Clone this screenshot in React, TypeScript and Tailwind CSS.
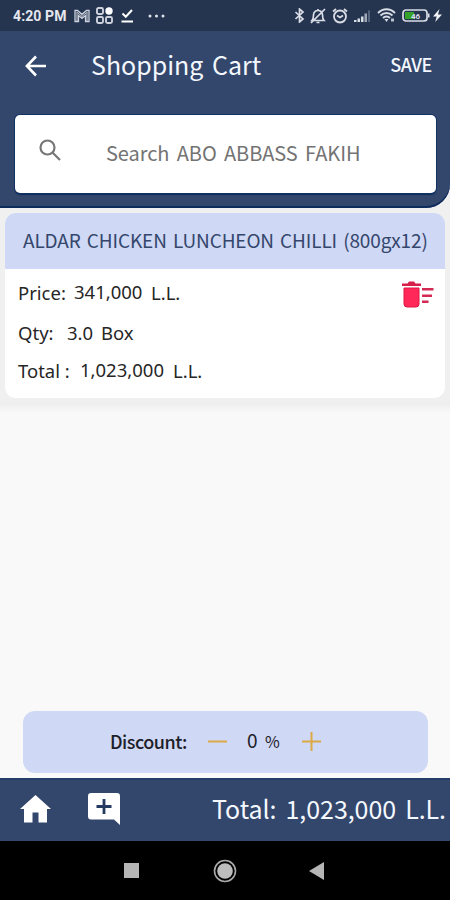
import React from "react";

const cjk = "font-['Noto_Sans_CJK_SC','Noto_Sans',sans-serif]";
const noto = "font-['Noto_Sans',sans-serif]";

function StatusBar() {
  return (
    <div className="flex h-[31px] items-center bg-[#25344f] pl-[13px] pr-[8px] text-[#e4e7ee]">
      <span className="w-[54px] whitespace-nowrap font-[Roboto,sans-serif] text-[14px] font-bold leading-none tracking-[0.1px]">4:20 PM</span>
      <svg className="ml-[7px]" width="16" height="14" viewBox="0 0 16 14" fill="none" stroke="#cdd2dd" strokeWidth="1.3">
        <path d="M1 12.500V1.500h2.500L8 5.300l4.500-3.800H15v11h-3.500V6.500L8 9.300 4.500 6.500v6z" />
        <path d="M3 3v9M13 3v9M3.500 3.500L8 7.500l4.500-4" strokeWidth="1" />
      </svg>
      <svg className="ml-[6px]" width="17" height="17" viewBox="0 0 17 17" fill="none" stroke="#cdd2dd" strokeWidth="1.900">
        <rect x="1" y="1" width="6" height="6" rx="1.500" />
        <rect x="1" y="10" width="6" height="6" rx="1.500" />
        <rect x="10" y="10" width="6" height="6" rx="1.500" />
        <circle cx="13" cy="4" r="3.700" fill="#fff" stroke="none" />
      </svg>
      <svg className="ml-[8px]" width="13" height="15" viewBox="0 0 13 15" fill="none" stroke="#fff" strokeWidth="2">
        <path d="M1.500 5.500l3.300 3.200L11 2M.5 13.500h11.500" />
      </svg>
      <svg className="ml-[14px]" width="17" height="4" viewBox="0 0 17 4" fill="#dfe3ea">
        <circle cx="2" cy="2" r="1.500" /><circle cx="8.500" cy="2" r="1.500" /><circle cx="15" cy="2" r="1.500" />
      </svg>
      <svg className="ml-auto" width="11" height="15" viewBox="0 0 11 15" fill="none" stroke="#d9dde6" strokeWidth="1.700">
        <path d="M1.500 4l7.500 7-3.500 3V1L9 4l-7.500 7" />
      </svg>
      <svg className="ml-[5px]" width="16" height="16" viewBox="0 0 16 16" fill="none" stroke="#d9dde6" strokeWidth="1.700">
        <path d="M2 12.500h12c-1.500-1.500-1.500-3-1.500-5.500 0-6-9-6-9 0 0 2.500 0 4-1.500 5.500zM6.500 14.500h3M15 1L1 15M8 1v2" />
      </svg>
      <svg className="ml-[6px]" width="16" height="16" viewBox="0 0 16 16" fill="none" stroke="#d9dde6" strokeWidth="1.800">
        <circle cx="8" cy="8.500" r="6" /><path d="M1 3.500L4 1M12 1l3 2.500M5 7.500l3 2 3-2" />
      </svg>
      <svg className="ml-[5px]" width="18" height="14" viewBox="0 0 18 14" fill="#d9dde6">
        <path d="M1 11h2.500v2H1zM4.500 9.500H7V13H4.500zM8 7.500h2.500V13H8z" />
        <path d="M11.500 4.500H14V13h-2.500z" fill="#a0a8b9" /><path d="M15 1.500h2V13h-2z" fill="#56637c" />
      </svg>
      <svg className="ml-[6px]" width="19" height="15" viewBox="0 0 19 15" fill="none" stroke="#d9dde6" strokeWidth="1.900">
        <path d="M1 5c5-5 12-5 17 0M3.500 7.500c3.500-3.300 8.500-3.300 12 0M6 10c2-2 5-2 7 0" />
        <path d="M9.500 14L7.500 11h4z" fill="#d9dde6" stroke="none" /><path d="M14 10.500h3v3h-3z" fill="#b9c0ce" stroke="none" />
      </svg>
      <svg className="ml-[6px]" width="28" height="13" viewBox="0 0 28 13">
        <rect x="1" y="1" width="24" height="11" rx="3" fill="none" stroke="#d9dde6" strokeWidth="1.700" />
        <path d="M3 3h9v7H3z" fill="#35a329" /><path d="M26 4.500h1.500v4H26z" fill="#d9dde6" />
        <text x="13.500" y="9.500" textAnchor="middle" fontSize="8" fontWeight="700" fontFamily="Roboto, sans-serif" fill="#d9dde6">46</text>
      </svg>
      <svg className="ml-[3px]" width="9" height="13" viewBox="0 0 9 13" fill="#f1f3f7"><path d="M6.500 0L0 7.500h3.700L2.200 13 9 5.500H5z" /></svg>
    </div>
  );
}

function Header() {
  return (
    <header className="h-[177px] rounded-br-[24px] bg-[#33466b] shadow-[inset_0_-2px_0_#0e2b5d]">
      <div className="flex h-[69px] items-center pl-[25px] pr-[18px] text-[#f3f8ff]">
        <svg width="22" height="22" viewBox="0 0 22 22" fill="none" stroke="white" strokeWidth="2.600"><path d="M11 1.500L1.900 11l9.100 9.500M2 11h19" /></svg>
        <h1 className={`${cjk} mb-[3px] ml-[44px] whitespace-nowrap text-[25px] leading-none [word-spacing:3px]`}>Shopping Cart</h1>
        <span className={`${cjk} mb-[3px] ml-auto text-[18px] font-medium leading-none tracking-[-0.4px]`}>SAVE</span>
      </div>
      <div className="ml-[15px] mt-[15px] flex h-[78px] w-[421px] items-center rounded-[5px] bg-white pl-[24px] shadow-[0_0_0_1px_#123263,0_2px_1px_#0e2b5d]">
        <svg className="mb-[7px]" width="22" height="23" viewBox="0 0 22 23" fill="none" stroke="#777" strokeWidth="2.200"><circle cx="8.500" cy="8.500" r="7" /><path d="M13.500 13.500L21 21" /></svg>
        <span className={`${cjk} mb-[2px] ml-[45px] whitespace-nowrap text-[20px] leading-none tracking-[-0.08px] text-[#737373] [word-spacing:3px]`}>Search ABO ABBASS FAKIH</span>
      </div>
    </header>
  );
}

function CartItem() {
  return (
    <section className="mx-[5px] mt-[5px] h-[185px] overflow-hidden rounded-[11px] bg-white">
      <h2 className={`${cjk} flex h-[56px] items-center whitespace-nowrap bg-[#cfd8f4] pb-[4px] pl-[18px] text-[19px] leading-none tracking-[-0.13px] text-[#34466c] [word-spacing:2px]`}>ALDAR CHICKEN LUNCHEON CHILLI (800gx12)</h2>
      <div className="flex justify-between pl-[13px] pr-[11px]">
        <div className={`${noto} text-[18.500px] leading-[38px] text-[#262626]`}>
          <div className="flex h-[46px] items-center whitespace-nowrap pt-[2px]"><span className="w-[56px]">Price:</span><span className="mb-[2px] w-[77px]">341,000</span><span>L.L.</span></div>
          <div className="flex h-[36px] items-center whitespace-nowrap"><span className="w-[49px]">Qty:</span><span className="w-[34px]">3.0</span><span>Box</span></div>
          <div className="flex h-[40px] items-center whitespace-nowrap"><span className="w-[62px]">Total :</span><span className="mb-[3px] w-[93px]">1,023,000</span><span>L.L.</span></div>
        </div>
        <svg className="mt-[12px]" width="32" height="27" viewBox="0 0 32 27">
          <path d="M0 2.500h5.500L7 .5h5l1.500 2H19V5H0z" fill="#d51e49" />
          <path d="M2 7h15v16a3 3 0 01-3 3H5a3 3 0 01-3-3z" fill="#ff2858" stroke="#dc1944" />
          <path d="M20 7h11.500v2.500H20zM20 13.500h10V16H20zM20 19.500h6.500V22H20z" fill="#d32a53" />
        </svg>
      </div>
    </section>
  );
}

function Discount() {
  return (
    <section className={`${cjk} ml-[23px] flex h-[62px] w-[405px] items-center rounded-[12px] bg-[#cfd8f4] pb-[1px] pl-[87px] text-[#1d2029]`}>
      <span className="mb-[2px] w-[98px] whitespace-nowrap text-[18px] font-medium leading-none tracking-[-0.5px]">Discount:</span>
      <svg width="19" height="3" viewBox="0 0 19 3"><path d="M0 .5h19v2H0z" fill="#dda946" /></svg>
      <span className="mb-[4px] ml-[20px] w-[18px] text-[19px] leading-none">0</span>
      <span className="mb-[2px] w-[37px] text-[16px] leading-none">%</span>
      <svg width="19" height="19" viewBox="0 0 19 19"><path d="M0 8.500h8.500V0h2v8.500H19v2h-8.500V19h-2v-8.500H0z" fill="#dda946" /></svg>
    </section>
  );
}

function BottomBar() {
  return (
    <footer className="flex h-[63px] items-center border-t-2 border-[#243d6a] bg-[#33466b] pl-[20px] pr-[4px] text-white">
      <svg className="mb-[3px]" width="31" height="28" viewBox="0 0 31 28" fill="white"><path d="M15.500 0L31 14h-4v13.500h-8.500v-10h-6v10H4V14H0z" /></svg>
      <svg className="mb-[3px] ml-[37px]" width="32" height="32" viewBox="0 0 32 32"><path d="M3 0h26a3 3 0 013 3v29l-6-5.500H3a3 3 0 01-3-3V3a3 3 0 013-3z" fill="white" /><path d="M16 6v15M8.500 13.500h15" stroke="#243a61" strokeWidth="2.800" /></svg>
      <span className={`${cjk} mb-[5px] ml-auto whitespace-nowrap text-[25px] leading-none tracking-[-0.05px] text-[#f3f8ff] [word-spacing:3.500px]`}>Total: 1,023,000 L.L.</span>
    </footer>
  );
}

function NavigationBar() {
  return (
    <nav className="flex h-[59px] items-center bg-black pl-[124px]">
      <svg width="16" height="16" viewBox="0 0 16 16"><path d="M0 0h15v15H0z" fill="#b5b5b5" /></svg>
      <svg className="ml-[73px]" width="24" height="24" viewBox="0 0 24 24"><circle cx="12" cy="12" r="10.500" fill="none" stroke="#aaa" strokeWidth="1.600" /><circle cx="12" cy="12" r="7.800" fill="#bdbdbd" /></svg>
      <svg className="ml-[72px]" width="16" height="18" viewBox="0 0 16 18"><path d="M0 9L15 0v18z" fill="#b5b5b5" /></svg>
    </nav>
  );
}

export default function App() {
  return (
    <main className="flex h-[900px] w-[450px] flex-col overflow-hidden bg-[#f9f9f9]">
      <div className="h-[420px] bg-[linear-gradient(#f0f0f0_398px,#eeeeee_404px,#f9f9f9_413px)]">
        <StatusBar />
        <Header />
        <CartItem />
      </div>
      <div className="flex-1" />
      <Discount />
      <div className="h-[5px]" />
      <BottomBar />
      <NavigationBar />
    </main>
  );
}
